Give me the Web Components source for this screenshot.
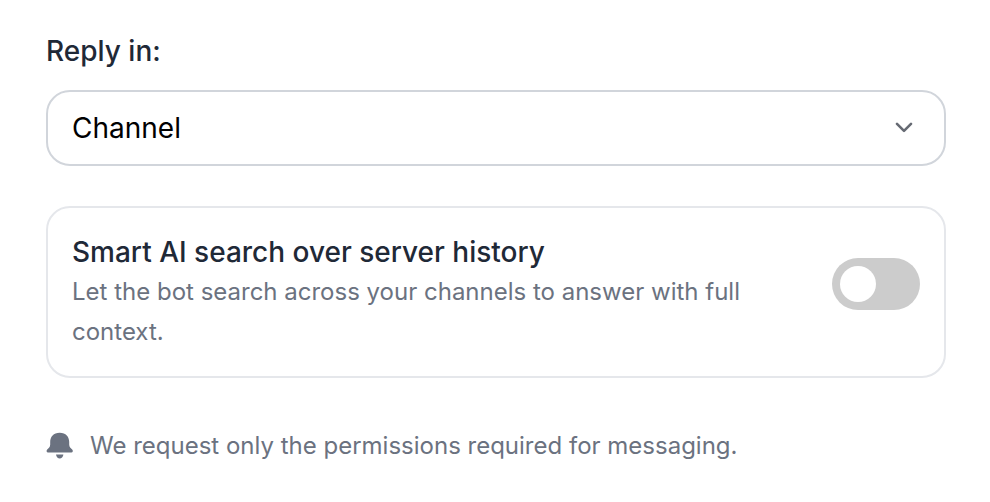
<!DOCTYPE html>
<html lang="en">
<head>
<meta charset="utf-8">
<title>Reply settings</title>
<style>
  html, body { margin: 0; background: #fff; }
  body { font-family: Inter, "Liberation Sans", sans-serif; }
</style>
</head>
<body>
<settings-panel>
  <field-select label="Reply in:" value="Channel"></field-select>
  <toggle-card heading="Smart AI search over server history">Let the bot search across your channels to answer with full context.</toggle-card>
  <perm-note>We request only the permissions required for messaging.</perm-note>
</settings-panel>

<script>
// settings panel and its parts

class SettingsPanel extends HTMLElement {
  constructor() {
    super();
    this.attachShadow({ mode: 'open' });
    this.shadowRoot.innerHTML = `
      <style>
        :host {
          display: flex;
          flex-direction: column;
          width: 900px;
          padding: 33px 44px 0 46px;
        }
      </style>
      <slot></slot>
    `;
  }
}

class FieldSelect extends HTMLElement {
  constructor() {
    super();
    this.attachShadow({ mode: 'open' });
  }

  connectedCallback() {
    this.shadowRoot.innerHTML = `
      <style>
        :host { display: block; }
        .label {
          font-size: 28px;
          line-height: 36px;
          font-weight: 500;
          color: #1f2937;
          margin-bottom: 21px;
        }
        .box {
          box-sizing: border-box;
          height: 76px;
          display: flex;
          align-items: center;
          justify-content: space-between;
          padding: 0 30px 0 24px;
          border: 2px solid #d1d5db;
          border-radius: 24px;
          background: #fff;
          font-size: 28px;
          color: #000;
        }
        svg { display: block; width: 20px; height: 12px; }
      </style>
      <div class="label">${this.getAttribute('label')}</div>
      <div class="box">
        <span>${this.getAttribute('value')}</span>
        <svg viewBox="0 0 20 12" fill="none" stroke="#666a73" stroke-width="2.6" stroke-linecap="round" stroke-linejoin="round">
          <path d="M3 1.8 L10 8.8 L17 1.8"/>
        </svg>
      </div>
    `;
  }
}

class ToggleSwitch extends HTMLElement {
  constructor() {
    super();
    this.attachShadow({ mode: 'open' });
    this.shadowRoot.innerHTML = `
      <style>
        :host {
          display: flex;
          align-items: center;
          flex: none;
          box-sizing: border-box;
          width: 88px;
          height: 52px;
          padding: 8px;
          border-radius: 26px;
          background: #ccc;
        }
        .knob { width: 36px; height: 36px; border-radius: 50%; background: #fff; }
      </style>
      <div class="knob"></div>
    `;
  }
}

class ToggleCard extends HTMLElement {
  constructor() {
    super();
    this.attachShadow({ mode: 'open' });
  }

  connectedCallback() {
    this.shadowRoot.innerHTML = `
      <style>
        :host {
          display: flex;
          align-items: flex-start;
          justify-content: space-between;
          box-sizing: border-box;
          height: 172px;
          margin-top: 40px;
          padding: 24px 24px 0 24px;
          border: 2px solid #e5e7eb;
          border-radius: 24px;
        }
        .text { width: 700px; }
        .heading {
          font-size: 28px;
          line-height: 40px;
          font-weight: 500;
          color: #1f2937;
        }
        .desc {
          font-size: 24px;
          line-height: 40px;
          color: #6b7280;
        }
        toggle-switch { margin-top: 26px; }
      </style>
      <div class="text">
        <div class="heading">${this.getAttribute('heading')}</div>
        <div class="desc"><slot></slot></div>
      </div>
      <toggle-switch></toggle-switch>
    `;
  }
}

class PermNote extends HTMLElement {
  constructor() {
    super();
    this.attachShadow({ mode: 'open' });
    this.shadowRoot.innerHTML = `
      <style>
        :host {
          display: flex;
          align-items: center;
          gap: 16px;
          margin-top: 48px;
          font-size: 24px;
          line-height: 40px;
          color: #6b7280;
        }
        svg { display: block; flex: none; width: 28px; height: 28px; }
      </style>
      <svg viewBox="0 0 28 28" fill="#6b7280">
        <path d="M13.7 0.7 C7.5 0.7 4.2 4.8 4.2 10 V12.5 C4.2 15 2.6 16.2 1.2 17.6 C0 18.8 0.6 20.6 2 20.6 H25.4 C26.8 20.6 27.4 18.8 26.2 17.6 C24.8 16.2 23.2 15 23.2 12.5 V10 C23.2 4.8 19.9 0.7 13.7 0.7 Z"/>
        <path d="M10 22.6 H17.4 C17 25.2 15.5 26.6 13.7 26.6 C11.9 26.6 10.4 25.2 10 22.6 Z"/>
      </svg>
      <span><slot></slot></span>
    `;
  }
}

customElements.define('settings-panel', SettingsPanel);
customElements.define('field-select', FieldSelect);
customElements.define('toggle-switch', ToggleSwitch);
customElements.define('toggle-card', ToggleCard);
customElements.define('perm-note', PermNote);
</script>
</body>
</html>
